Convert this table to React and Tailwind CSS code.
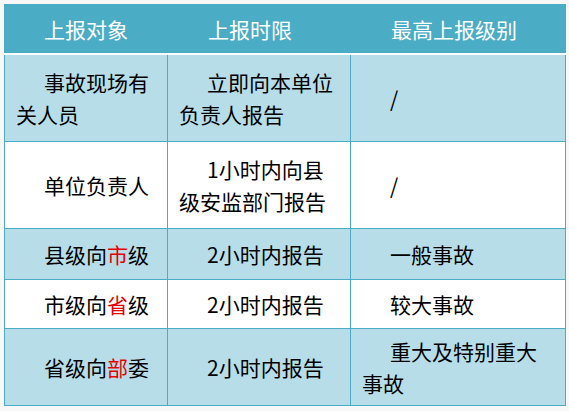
import React from "react";

const rows = [
  { h: "h-[87px]", bg: "bg-[#b7dde8]", cells: [["事故现场有关人员"], ["立即向本单位负责人报告"], ["/"]] },
  { h: "h-[87px]", bg: "bg-white", cells: [["单位负责人"], ["1小时内向县级安监部门报告"], ["/"]] },
  { h: "h-[51px]", bg: "bg-[#b7dde8]", cells: [["县级向", "市", "级"], ["2小时内报告"], ["一般事故"]] },
  { h: "h-[49px]", bg: "bg-white", cells: [["市级向", "省", "级"], ["2小时内报告"], ["较大事故"]] },
  { h: "h-[77px]", bg: "bg-[#b7dde8]", cells: [["省级向", "部", "委"], ["2小时内报告"], ["重大及特别重大事故"]] },
];

const widths = ["w-[163px]", "w-[183px]", "w-[215px]"];

const Cell = ({ parts, width }) => (
  <div className={`${width} flex items-center border-r border-[#4bacc6] px-[11px]`}>
    <p className="w-full indent-[28px] leading-[32px]">
      {parts[0]}
      {parts[1] && <span className="text-[#e60000]">{parts[1]}</span>}
      {parts[2]}
    </p>
  </div>
);

export default function App() {
  return (
    <div
      className="min-h-screen bg-[#f8f8f8] pt-1 pl-1 text-[21px] text-black"
      style={{ fontFamily: '"Noto Sans CJK SC", "Noto Sans", sans-serif' }}
    >
      <div className="w-[562px]">
        <div className="flex h-[51px] border-b-2 border-white bg-[#4bacc6] text-white">
          {["上报对象", "上报时限", "最高上报级别"].map((t, i) => (
            <div key={t} className={`${i === 0 ? "w-[164px]" : widths[i]} flex items-center px-[12px]`}>
              <p className="indent-[28px] leading-[32px]">{t}</p>
            </div>
          ))}
        </div>
        <div className="border-l border-[#4bacc6]">
          {rows.map((r, i) => (
            <div key={i} className={`flex ${r.h} ${r.bg} border-b border-[#4bacc6]`}>
              {r.cells.map((c, j) => (
                <Cell key={j} parts={c} width={widths[j]} />
              ))}
            </div>
          ))}
        </div>
      </div>
    </div>
  );
}
